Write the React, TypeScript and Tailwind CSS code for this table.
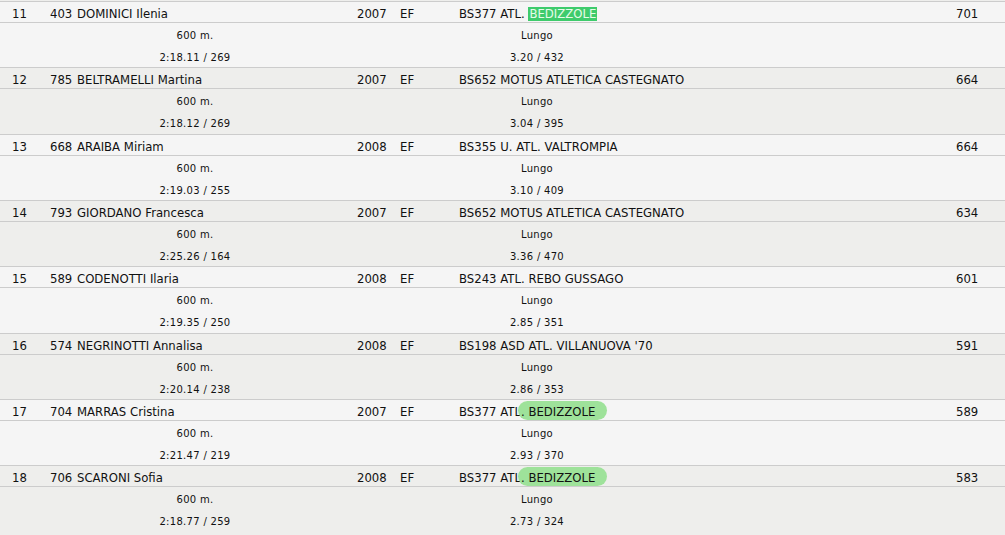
const rows = [
  { rank: 11, bib: 403, name: "DOMINICI Ilenia", year: 2007, cat: "EF", club: "BS377 ATL. ", hl: "box", rest: "BEDIZZOLE", time: "2:18.11 / 269", jump: "3.20 / 432", pts: 701 },
  { rank: 12, bib: 785, name: "BELTRAMELLI Martina", year: 2007, cat: "EF", club: "BS652 MOTUS ATLETICA CASTEGNATO", hl: "", rest: "", time: "2:18.12 / 269", jump: "3.04 / 395", pts: 664 },
  { rank: 13, bib: 668, name: "ARAIBA Miriam", year: 2008, cat: "EF", club: "BS355 U. ATL. VALTROMPIA", hl: "", rest: "", time: "2:19.03 / 255", jump: "3.10 / 409", pts: 664 },
  { rank: 14, bib: 793, name: "GIORDANO Francesca", year: 2007, cat: "EF", club: "BS652 MOTUS ATLETICA CASTEGNATO", hl: "", rest: "", time: "2:25.26 / 164", jump: "3.36 / 470", pts: 634 },
  { rank: 15, bib: 589, name: "CODENOTTI Ilaria", year: 2008, cat: "EF", club: "BS243 ATL. REBO GUSSAGO", hl: "", rest: "", time: "2:19.35 / 250", jump: "2.85 / 351", pts: 601 },
  { rank: 16, bib: 574, name: "NEGRINOTTI Annalisa", year: 2008, cat: "EF", club: "BS198 ASD ATL. VILLANUOVA '70", hl: "", rest: "", time: "2:20.14 / 238", jump: "2.86 / 353", pts: 591 },
  { rank: 17, bib: 704, name: "MARRAS Cristina", year: 2007, cat: "EF", club: "BS377 ATL", hl: "pen", rest: ". BEDIZZOLE", time: "2:21.47 / 219", jump: "2.93 / 370", pts: 589 },
  { rank: 18, bib: 706, name: "SCARONI Sofia", year: 2008, cat: "EF", club: "BS377 ATL", hl: "pen", rest: ". BEDIZZOLE", time: "2:18.77 / 259", jump: "2.73 / 324", pts: 583 },
];

export default function App() {
  return (
    <div
      className="w-[1005px] h-[535px] overflow-hidden bg-[#eeeeec] text-[#111]"
      style={{ fontFamily: '"DejaVu Sans", Verdana, sans-serif' }}
    >
      <div className="h-px bg-[#eeeeec]" />
      {rows.map((r, i) => (
        <div
          key={r.rank}
          className={`border-t border-[#cccccc] ${i % 2 === 0 ? "bg-[#f5f5f5]" : "bg-[#eeeeec]"} ${i % 3 === 1 ? "h-[67px]" : "h-[66px]"}`}
        >
          {/* main row */}
          <div className="flex h-[21px] items-center border-b border-[#cccccc] pt-[5px] text-[11.7px]">
            <span className="w-[50px] pl-[12px]">{r.rank}</span>
            <span className="w-[27px]">{r.bib}</span>
            <span className="w-[280px]">{r.name}</span>
            <span className="w-[43px]">{r.year}</span>
            <span className="w-[59px]">{r.cat}</span>
            <span className="relative w-[497px] whitespace-nowrap">
              {r.club}
              {r.hl === "box" && (
                <span className="bg-[#3ecb6c] px-px text-[#e6fbe9]">{r.rest}</span>
              )}
              {r.hl === "pen" && (
                <span className="relative">
                  <span className="absolute -left-[3px] -right-[12px] -top-[4px] -bottom-[1px] rounded-full bg-[#9ee29a]" />
                  <span className="relative">{r.rest}</span>
                </span>
              )}
            </span>
            <span className="w-[30px]">{r.pts}</span>
          </div>
          {/* events */}
          <div className="grid grid-cols-[390px_294px] pt-[1px] text-[10px] tracking-[0.3px]">
            <div className="flex h-[22px] items-center justify-center">600 m.</div>
            <div className="flex h-[22px] items-center justify-center">Lungo</div>
            <div className="flex h-[22px] items-center justify-center">{r.time}</div>
            <div className="flex h-[22px] items-center justify-center">{r.jump}</div>
          </div>
        </div>
      ))}
    </div>
  );
}
